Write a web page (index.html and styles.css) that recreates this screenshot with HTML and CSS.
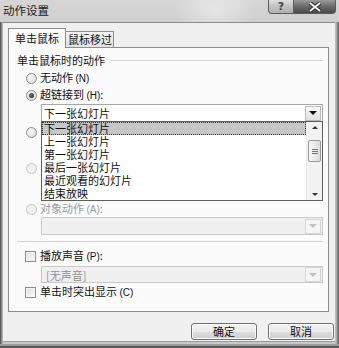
FILE: index.html
```html
<!DOCTYPE html>
<html lang="zh">
<head>
<meta charset="utf-8">
<link rel="stylesheet" href="styles.css">
</head>
<body>
<div class="window">
  <div class="titlebar">
    <span class="title">动作设置</span>
    <div class="caption-btns">
      <div class="cbtn help">?</div>
      <div class="cbtn close">
        <svg width="14" height="10" viewBox="0 0 14 10"><path d="M2 1 L12 9 M12 1 L2 9" stroke="#2a2a2a" stroke-width="4"/><path d="M2 1 L12 9 M12 1 L2 9" stroke="#f4f4f4" stroke-width="2"/></svg>
      </div>
    </div>
  </div>
  <div class="client">
    <div class="tabs">
      <div class="tab active">单击鼠标</div>
      <div class="tab">鼠标移过</div>
    </div>
    <div class="panel">
      <div class="group-head"><span>单击鼠标时的动作</span><div class="line"></div></div>
      <div class="opt r1"><span class="radio"></span><span>无动作 <u>(N)</u></span></div>
      <div class="opt r2"><span class="radio checked"></span><span>超链接到 <u>(H)</u>:</span></div>
      <div class="combo c1">
        <span class="val">下一张幻灯片</span>
        <span class="dbtn"><i class="tri"></i></span>
        <div class="list">
          <div class="items">
            <div class="item sel">下一张幻灯片</div>
            <div class="item">上一张幻灯片</div>
            <div class="item">第一张幻灯片</div>
            <div class="item">最后一张幻灯片</div>
            <div class="item">最近观看的幻灯片</div>
            <div class="item">结束放映</div>
          </div>
          <div class="vscroll">
            <div class="sarrow"><i class="utri"></i></div>
            <div class="strack"><div class="thumb"><i></i><i></i><i></i></div></div>
            <div class="sarrow"><i class="dtri"></i></div>
          </div>
        </div>
      </div>
      <div class="opt r3"><span class="radio"></span></div>
      <div class="opt r4"><span class="radio dis"></span></div>
      <div class="opt r5 dis"><span class="radio dis"></span><span>对象动作 <u>(A)</u>:</span></div>
      <div class="combo disabled c2">
        <span class="val"></span>
        <span class="dbtn"><i class="tri"></i></span>
      </div>
      <div class="sep"></div>
      <div class="opt k1"><span class="check"></span><span>播放声音 <u>(P)</u>:</span></div>
      <div class="combo disabled c3">
        <span class="val">[无声音]</span>
        <span class="dbtn"><i class="tri"></i></span>
      </div>
      <div class="opt k2"><span class="check"></span><span>单击时突出显示 <u>(C)</u></span></div>
    </div>
    <div class="buttons">
      <div class="btn">确定</div>
      <div class="btn">取消</div>
    </div>
  </div>
</div>
</body>
</html>
```

FILE: styles.css
```css
* { box-sizing: border-box; }
html, body { margin: 0; padding: 0; }
body {
  width: 339px;
  height: 348px;
  overflow: hidden;
  font-family: "Noto Sans CJK SC", "Liberation Sans", sans-serif;
  font-size: 11px;
  color: #111;
}
.window {
  width: 339px;
  height: 348px;
  display: flex;
  flex-direction: column;
  background: linear-gradient(90deg, #4a4a4a 0, #9a9a9a 2px, #c8c8c8 3px, #c8c8c8 335px, #9a9a9a 337px, #5a5a5a 339px);
  box-shadow: inset 0 -2px 0 #5a5a5a, inset 0 -4px 0 #9a9a9a;
}
.titlebar {
  height: 22px;
  flex: none;
  display: flex;
  justify-content: space-between;
  align-items: flex-start;
  background:
    radial-gradient(ellipse 60px 40px at 215px 10px, rgba(255,255,255,0.45), rgba(255,255,255,0) 70%),
    linear-gradient(180deg, #d6d6d6 0, #cfcfcf 100%);
}
.title {
  margin: 3px 0 0 3px;
  font-size: 11.5px;
  line-height: 14px;
  color: #1a1a1a;
}
.caption-btns {
  display: flex;
  margin-right: 3px;
}
.cbtn {
  height: 14px;
  display: flex;
  align-items: center;
  justify-content: center;
  border: 1px solid #5c5c5c;
  border-top: none;
}
.cbtn.help {
  width: 26px;
  border-radius: 0 0 0 4px;
  background: linear-gradient(180deg, #dedede 0, #c2c2c2 50%, #b0b0b0 100%);
  font-family: "DejaVu Sans", sans-serif;
  font-weight: bold;
  font-size: 11px;
  color: #444;
  line-height: 12px;
}
.cbtn.close {
  width: 42px;
  border-left: none;
  border-radius: 0 0 4px 0;
  background: linear-gradient(180deg, #9a9a9a 0, #6a6a6a 50%, #4a4a4a 100%);
}
.client {
  flex: 1;
  margin: 0 4px 6px 3px;
  border-top: 1px solid #8a8a8a;
  border-bottom: 1px solid #9a9a9a;
  background: #f0f0f0;
  padding: 5px 0 0 5px;
  display: flex;
  flex-direction: column;
}
.tabs {
  display: flex;
  align-items: flex-end;
  height: 19px;
  position: relative;
  z-index: 1;
}
.tab {
  height: 16px;
  padding: 0 2px;
  border: 1px solid #8d8d8d;
  border-bottom: none;
  background: linear-gradient(180deg, #f2f2f2, #e3e3e3);
  line-height: 15px;
  white-space: nowrap;
  width: 48px;
  text-align: center;
}
.tab.active {
  height: 20px;
  margin-bottom: -1px;
  background: #fbfbfb;
  line-height: 18px;
  width: 58px;
}
.tab + .tab { border-left: none; }
.panel {
  width: 321px;
  height: 265px;
  border: 1px solid #8d8d8d;
  background: #fbfbfb;
  padding: 5px 5px 0 8px;
  display: flex;
  flex-direction: column;
}
.group-head {
  display: flex;
  align-items: center;
  height: 14px;
  line-height: 14px;
  white-space: nowrap;
}
.group-head .line {
  flex: 1;
  height: 1px;
  background: #d5d5d5;
  margin-left: 6px;
  margin-top: 1px;
}
.opt {
  display: flex;
  align-items: center;
  height: 14px;
  line-height: 14px;
  padding-left: 9px;
  white-space: nowrap;
}
.opt u { text-decoration: none; font-family: "Liberation Sans", sans-serif; font-size: 10px; }
.opt.dis { color: #9a9a9a; }
.r1 { margin-top: 4px; }
.r2 { margin-top: 3px; }
.r3 { margin-top: 3px; }
.r4 { margin-top: 22px; }
.r5 { margin-top: 27px; }
.k1 { margin-top: 7px; padding-left: 8px; }
.k2 { margin-top: 2px; padding-left: 8px; }
.radio {
  width: 11px;
  height: 11px;
  border-radius: 50%;
  border: 1px solid #8e8e8e;
  background: radial-gradient(circle at 40% 40%, #fafafa 0, #dedede 70%);
  margin-right: 3px;
  display: flex;
  align-items: center;
  justify-content: center;
  flex: none;
}
.radio.checked::after {
  content: "";
  width: 5px;
  height: 5px;
  border-radius: 50%;
  background: radial-gradient(circle at 40% 40%, #777, #1a1a1a);
}
.radio.dis { border-color: #c6c6c6; background: #f1f1f1; }
.check {
  width: 11px;
  height: 11px;
  border: 1px solid #8e8e8e;
  background: linear-gradient(135deg, #e0e0e0, #fbfbfb);
  box-shadow: inset 0 0 0 1px #f4f4f4;
  margin-right: 4px;
  flex: none;
}
.combo {
  position: relative;
  margin-left: 24px;
  height: 18px;
  border: 1px solid #a6a6a6;
  background: #fff;
  display: flex;
  align-items: center;
  justify-content: space-between;
  padding: 0 1px 0 2px;
}
.c1 { margin-top: 2px; }
.c2 { margin-top: 1px; }
.c3 { margin-top: 3px; height: 17px; }
.val { line-height: 14px; }
.dbtn {
  width: 16px;
  height: 15px;
  border: 1px solid #b9b9b9;
  background: linear-gradient(180deg, #f7f7f7, #e2e2e2);
  display: flex;
  align-items: center;
  justify-content: center;
}
.tri {
  width: 0;
  height: 0;
  border-left: 4px solid transparent;
  border-right: 4px solid transparent;
  border-top: 4px solid #111;
}
.combo.disabled { background: #f0f0f0; border-color: #c9c9c9; }
.combo.disabled .val { color: #8f8f8f; padding-left: 2px; }
.combo.disabled .dbtn { border-color: #d6d6d6; background: #f4f4f4; }
.combo.disabled .tri { border-top-color: #c0c0c0; }
.list {
  position: absolute;
  left: -1px;
  right: -1px;
  top: 16px;
  height: 80px;
  border: 1px solid #5e5e5e;
  background: #fff;
  display: flex;
  z-index: 2;
}
.items { flex: 1; }
.item {
  height: 13px;
  line-height: 13px;
  padding-left: 2px;
  white-space: nowrap;
}
.item.sel {
  background: #c6c6c6;
  outline: 1px dotted #333;
  outline-offset: -1px;
}
.vscroll {
  width: 16px;
  display: flex;
  flex-direction: column;
  background: #f2f2f2;
  border-left: 1px solid #ececec;
}
.sarrow {
  height: 11px;
  display: flex;
  align-items: center;
  justify-content: center;
}
.utri { width: 0; height: 0; border-left: 3px solid transparent; border-right: 3px solid transparent; border-bottom: 3px solid #333; }
.dtri { width: 0; height: 0; border-left: 3px solid transparent; border-right: 3px solid transparent; border-top: 3px solid #333; }
.strack { flex: 1; padding-top: 7px; }
.thumb {
  height: 22px;
  margin: 0 1px;
  border: 1px solid #9a9a9a;
  border-radius: 2px;
  background: linear-gradient(90deg, #f6f6f6, #dcdcdc);
  display: flex;
  flex-direction: column;
  align-items: center;
  justify-content: center;
  gap: 1px;
}
.thumb i { display: block; width: 6px; height: 1px; background: #777; }
.sep {
  height: 1px;
  background: #d0d0d0;
  margin-top: 6px;
}
.buttons {
  display: flex;
  justify-content: flex-end;
  gap: 11px;
  margin-top: 11px;
  padding-right: 1px;
}
.btn {
  width: 66px;
  height: 17px;
  border: 1px solid #707070;
  border-radius: 3px;
  background: linear-gradient(180deg, #f2f2f2 0, #ebebeb 50%, #dddddd 51%, #cfcfcf 100%);
  box-shadow: inset 0 0 0 1px #fafafa;
  text-align: center;
  line-height: 15px;
}
```
